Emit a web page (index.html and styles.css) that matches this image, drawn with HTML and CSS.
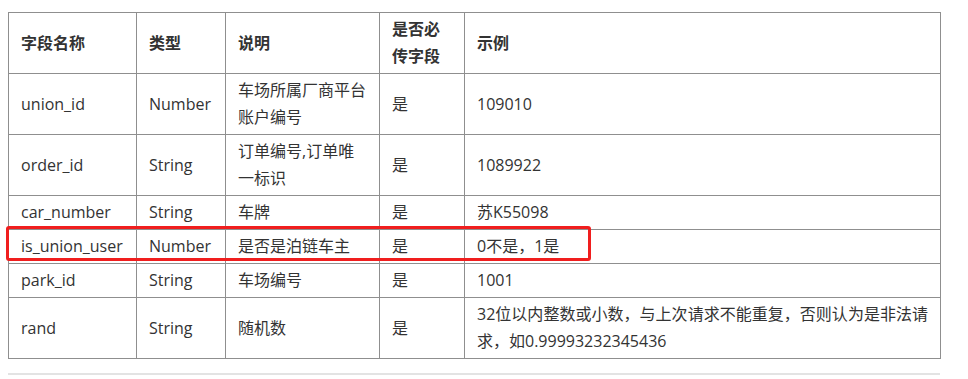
FILE: index.html
```html
<!DOCTYPE html>
<html lang="zh-CN">
<head>
<meta charset="utf-8">
<title>字段说明</title>
<link rel="stylesheet" href="styles.css">
</head>
<body>
<div class="page">
  <div class="table-wrap">
    <table class="fields">
      <colgroup>
        <col class="c-name">
        <col class="c-type">
        <col class="c-desc">
        <col class="c-req">
        <col class="c-ex">
      </colgroup>
      <thead>
        <tr>
          <th>字段名称</th>
          <th>类型</th>
          <th>说明</th>
          <th>是否必传字段</th>
          <th>示例</th>
        </tr>
      </thead>
      <tbody>
        <tr>
          <td>union_id</td>
          <td>Number</td>
          <td>车场所属厂商平台账户编号</td>
          <td>是</td>
          <td>109010</td>
        </tr>
        <tr>
          <td>order_id</td>
          <td>String</td>
          <td>订单编号,订单唯一标识</td>
          <td>是</td>
          <td>1089922</td>
        </tr>
        <tr>
          <td>car_number</td>
          <td>String</td>
          <td>车牌</td>
          <td>是</td>
          <td>苏K55098</td>
        </tr>
        <tr>
          <td>is_union_user</td>
          <td>Number</td>
          <td>是否是泊链车主</td>
          <td>是</td>
          <td>0不是，1是</td>
        </tr>
        <tr>
          <td>park_id</td>
          <td>String</td>
          <td>车场编号</td>
          <td>是</td>
          <td>1001</td>
        </tr>
        <tr>
          <td>rand</td>
          <td>String</td>
          <td>随机数</td>
          <td>是</td>
          <td class="justify">32位以内整数或小数，与上次请求不能重复，否则认为是非法请求，如0.99993232345436</td>
        </tr>
      </tbody>
    </table>
    <div class="highlight"></div>
  </div>
  <hr class="rule">
</div>
</body>
</html>
```

FILE: styles.css
```css
html, body {
  margin: 0;
  padding: 0;
  background: #ffffff;
}

body {
  font-family: "Open Sans", "Noto Sans CJK SC", sans-serif;
  font-size: 16px;
  color: #333333;
}

.page {
  padding: 12px 0 0 8px;
  width: 932px;
}

.table-wrap {
  position: relative;
}

.fields {
  border-collapse: collapse;
  table-layout: fixed;
  width: 932px;
}

.c-name { width: 128px; }
.c-type { width: 89px; }
.c-desc { width: 154px; }
.c-req  { width: 85px; }
.c-ex   { width: 476px; }

.fields th,
.fields td {
  border: 1px solid #8f8f8f;
  padding: 3px 12px;
  line-height: 27px;
  text-align: left;
  vertical-align: middle;
  word-break: break-all;
}

.fields th {
  font-weight: bold;
}

.fields td.justify {
  text-align: justify;
}

.highlight {
  position: absolute;
  left: -2px;
  top: 214px;
  width: 579px;
  height: 29px;
  border: 3px solid #f01e1e;
  border-radius: 3px;
}

.rule {
  margin: 14px 0 0 0;
  border: 0;
  height: 2px;
  background: #e3e3e3;
}
```
